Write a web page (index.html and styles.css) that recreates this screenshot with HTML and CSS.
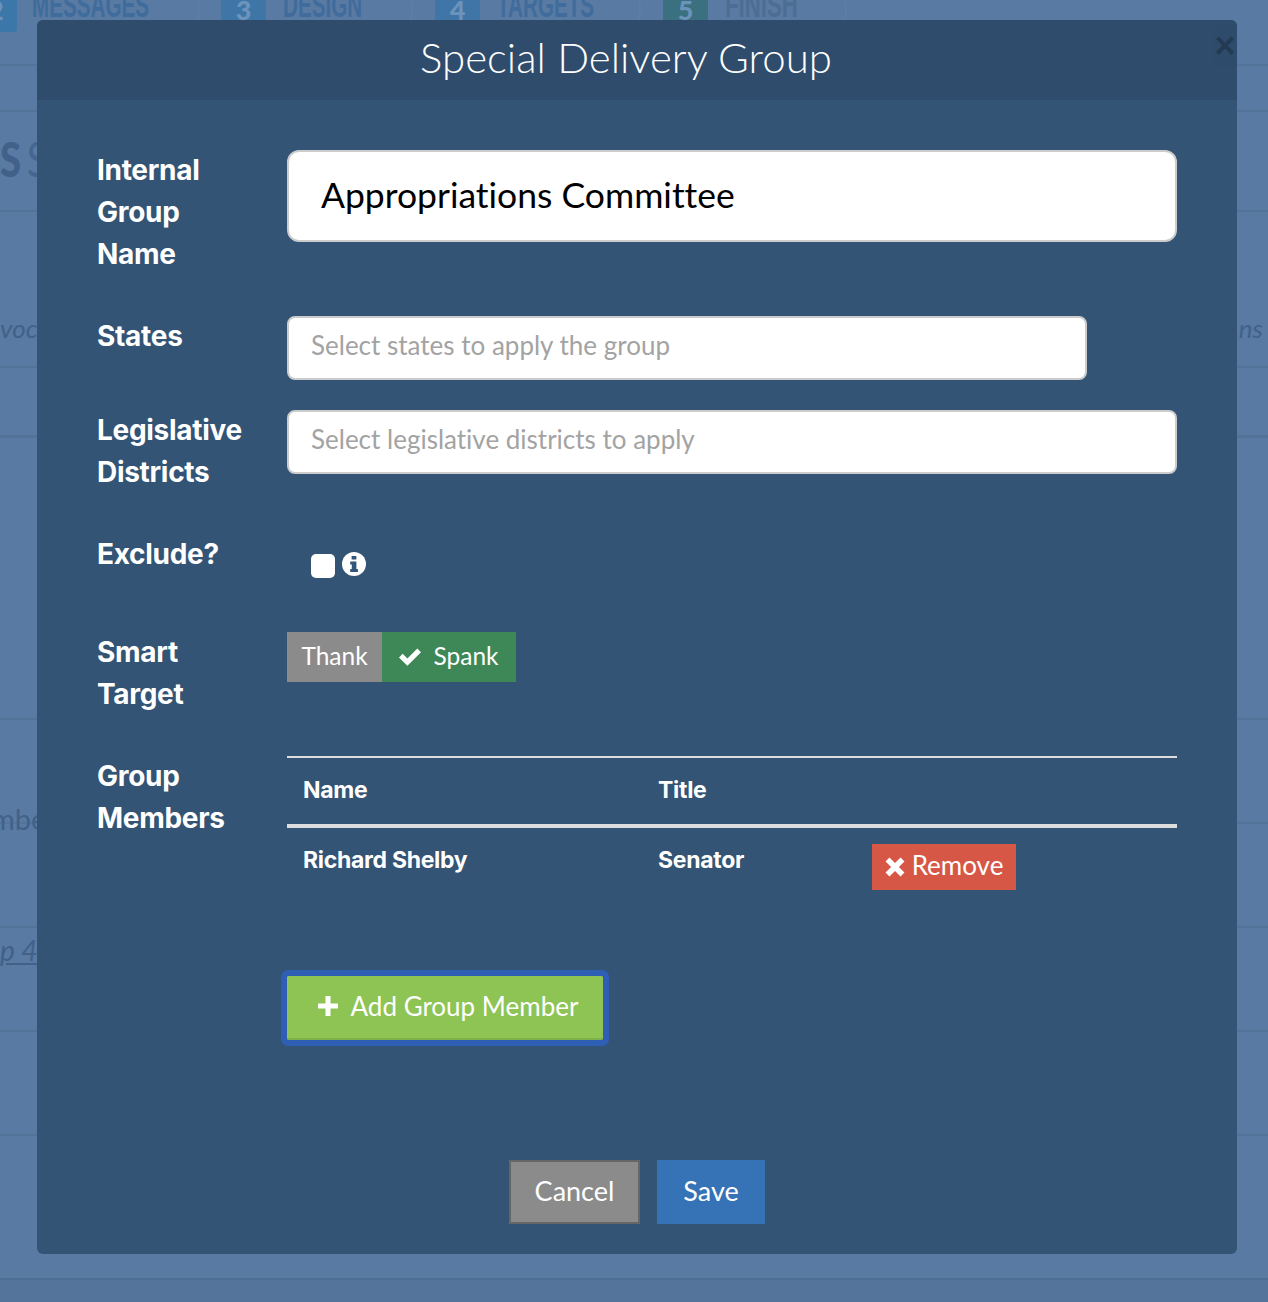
FILE: index.html
```html
<!DOCTYPE html>
<html lang="en">
<head>
<meta charset="utf-8">
<title>Special Delivery Group</title>
<link rel="stylesheet" href="styles.css">
</head>
<body>
<div class="page">
  <div class="steps">
    <div class="step step-1"><span class="num num-first">2</span><span class="step-name">MESSAGES</span><svg class="arc" viewBox="0 0 6 40" aria-hidden="true"><path d="M0 0q6 10 5 20T0 40"/></svg></div>
    <div class="step step-2"><span class="num num-3">3</span><span class="step-name">DESIGN</span><svg class="arc" viewBox="0 0 6 40" aria-hidden="true"><path d="M0 0q6 10 5 20T0 40"/></svg></div>
    <div class="step step-3"><span class="num num-4">4</span><span class="step-name">TARGETS</span><svg class="arc" viewBox="0 0 6 40" aria-hidden="true"><path d="M0 0q6 10 5 20T0 40"/></svg></div>
    <div class="step step-4"><span class="num num-5">5</span><span class="step-name step-name-last">FINISH</span><svg class="arc" viewBox="0 0 6 40" aria-hidden="true"><path d="M0 0q6 10 5 20T0 40"/></svg></div>
  </div>
  <div class="bg-row h46"></div>
  <div class="bg-row h100"><span class="bg-heading">S<span class="bg-heading-thin">S</span></span></div>
  <div class="bg-row h156"><span class="bg-it">voc</span><span class="bg-it">ns</span></div>
  <div class="bg-row h70"></div>
  <div class="bg-row h282"></div>
  <div class="bg-row h104 pad-84"><span class="bg-plain">mbe</span></div>
  <div class="bg-row h104"></div>
  <div class="bg-row h104 pad-7"><span class="bg-it bg-link">p 4</span></div>
  <div class="bg-row h104"></div>
  <div class="bg-row h144"></div>
  <div class="bg-foot"></div>
</div>

<div class="modal">
  <header class="modal-head">
    <h1 class="modal-title">Special Delivery Group</h1>
    <span class="close">&times;</span>
  </header>
  <form class="modal-body">
    <div class="row r-41">
      <label class="lbl">Internal Group Name</label>
      <input class="field field-big" type="text" value="Appropriations Committee">
    </div>
    <div class="row r-30">
      <label class="lbl">States</label>
      <input class="field field-short" type="text" placeholder="Select states to apply the group">
    </div>
    <div class="row r-41">
      <label class="lbl">Legislative Districts</label>
      <input class="field" type="text" placeholder="Select legislative districts to apply">
    </div>
    <div class="row r-41">
      <label class="lbl">Exclude?</label>
      <div class="check-wrap">
        <input class="check" type="checkbox">
        <svg class="info" viewBox="0 0 24 24" aria-hidden="true">
          <circle cx="12" cy="12" r="12" fill="#fff"/>
          <rect x="9.6" y="4" width="4.8" height="3.6" rx=".6" fill="#34557a"/>
          <path d="M8.2 9.4h6.2v7.6h1.5V20H8.2v-3h1.6v-4.6H8.2z" fill="#34557a"/>
        </svg>
      </div>
    </div>
    <div class="row r-41">
      <label class="lbl">Smart Target</label>
      <div class="toggle">
        <button type="button" class="tg tg-off">Thank</button>
        <button type="button" class="tg tg-on">
          <svg class="tg-check" viewBox="0 0 22 18" aria-hidden="true"><path d="M0 9.400 3.700 5.700l4.700 4.700L18.300 .5 22 4.200 8.400 17.800z" fill="#fff"/></svg>
          Spank
        </button>
      </div>
    </div>
    <div class="row">
      <label class="lbl">Group Members</label>
      <div class="members">
        <table class="tbl">
          <thead>
            <tr><th class="c1">Name</th><th class="c2">Title</th><th class="c3"></th></tr>
          </thead>
          <tbody>
            <tr>
              <td class="cell-text">Richard Shelby</td>
              <td class="cell-text">Senator</td>
              <td class="cell-action">
                <button type="button" class="btn-remove">
                  <svg class="x-icon" viewBox="0 0 18 18" aria-hidden="true"><path d="M4 .5 9 5.500 14 .5 17.500 4 12.500 9l5 5L14 17.500l-5-5-5 5L.5 14l5-5-5-5z" fill="#fff"/></svg>
                  Remove
                </button>
              </td>
            </tr>
          </tbody>
        </table>
        <button type="button" class="btn-add">
          <svg class="plus" viewBox="0 0 20 20" aria-hidden="true"><path d="M7.500 0h5v7.500H20v5h-7.500V20h-5v-7.500H0v-5h7.500z" fill="#fff"/></svg>
          Add Group Member
        </button>
      </div>
    </div>
    <div class="foot">
      <button type="button" class="btn-cancel">Cancel</button>
      <button type="button" class="btn-save">Save</button>
    </div>
  </form>
</div>
</body>
</html>
```
FILE: styles.css
```css
* { box-sizing: border-box; }
html, body { margin: 0; padding: 0; height: 1302px; overflow: hidden; }
body { background: #597aa2; font-family: "Lato", "Noto Sans", sans-serif; color: #fff; position: relative; }

/* page behind the modal */
.page { width: 100%; }
.steps { height: 66px; display: flex; border-bottom: 2px solid #547399; overflow: hidden; align-items: flex-start; }
.step { display: flex; align-items: flex-start; flex: none; }
.step-1 { width: 221px; }
.step-2 { width: 214px; }
.step-3 { width: 228px; }
.step-4 { width: 200px; }
.num { display: block; flex: none; width: 45px; height: 20px; background: #3e76a8; color: #6c93bb; font: 900 27px/19px "Lato", sans-serif; text-align: center; overflow: hidden; }
.num-first { width: 17px; height: 32px; border-radius: 0 0 3px 0; background: #3c77aa; text-align: left; text-indent: -12px; }
.num-4 { background: #3f75a7; }
.num-5 { background: #3a7080; }
.step-name { display: block; width: 0; white-space: nowrap; margin: -13px 0 0 17px; font: 700 35px/36px "Liberation Sans", sans-serif; color: #3f6c9c; transform: scaleX(.59); transform-origin: left top; }
.num-first + .step-name { margin-left: 15px; }
.step-name-last { color: #4d6d94; transform: scaleX(.635); }
.arc { flex: none; width: 6px; height: 40px; margin-top: -9px; margin-left: auto; fill: none; stroke: #5f80a8; stroke-width: 1.2; }
.step-1 .arc { margin-right: 21px; }
.step-2 .arc { margin-right: 22px; }
.step-3 .arc { margin-right: 22px; }
.step-4 .arc { margin-right: 16px; }
.bg-row { border-bottom: 2px solid #547399; display: flex; justify-content: space-between; align-items: flex-start; padding-right: 5px; }
.h46 { height: 46px; }
.h100 { height: 100px; padding-top: 23px; overflow: hidden; }
.h156 { height: 156px; padding-top: 101px; }
.h70 { height: 70px; border-bottom-width: 3px; }
.h282 { height: 282px; }
.h104 { height: 104px; }
.h144 { height: 144px; border-bottom-color: #4f6e95; }
.pad-84 { padding-top: 84px; }
.pad-7 { padding-top: 7px; }
.bg-foot { height: 24px; background: #55749b; }
.bg-heading { font: 900 48px/1 "Lato", sans-serif; color: #41618a; display: flex; gap: 7px; transform: scaleX(.8); transform-origin: left top; }
.bg-heading-thin { font-weight: 400; color: #45668f; }
.bg-it { font: italic 400 26px/30px "Lato", sans-serif; color: #41618a; }
.bg-plain { font: 400 29px/30px "Lato", sans-serif; color: #41618a; margin-left: -9px; }
.bg-link { text-decoration: underline; }
.pad-7 .bg-it { font-size: 28px; }

/* modal */
.modal { position: absolute; left: 37px; top: 20px; width: 1200px; height: 1234px; background: #335474; border-radius: 6px; overflow: hidden; }
.modal-head { height: 80px; background: #2f4c6c; display: flex; justify-content: center; position: relative; padding-right: 22px; }
.modal-title { margin: 0; font: 300 42px/74px "Lato", sans-serif; color: #fff; font-variant-ligatures: none; }
.close { position: absolute; right: 0; top: 6px; width: 24px; text-align: center; font: 700 36px/40px "Liberation Sans", sans-serif; color: #22384f; opacity: .85; }
.modal-body { display: flex; flex-direction: column; padding: 50px 60px 30px; height: 1154px; }

.row { display: grid; grid-template-columns: 190px 1fr; align-items: start; }
.r-41 { margin-bottom: 41px; }
.r-30 { margin-bottom: 30px; }
.lbl { display: block; margin-top: -1px; font: 700 28px/42px "Inter", sans-serif; letter-spacing: -.3px; color: #fff; padding-right: 30px; }

.field { display: block; width: 100%; height: 64px; padding: 0 22px 7px; border: 2px solid #ccc; border-radius: 8px; background: #fff; font: 400 26px "Lato", sans-serif; font-variant-ligatures: none; color: #000; outline: none; }
.field::placeholder { color: #a3a3a3; opacity: 1; }
.field-big { height: 92px; padding: 0 32px 4px; border-radius: 12px; font-size: 35.500px; }
.field-short { width: 800px; }

.check-wrap { display: flex; align-items: flex-start; height: 57px; padding: 18px 0 0 24px; }
.check { appearance: none; -webkit-appearance: none; width: 24px; height: 24px; margin: 2px 7px 0 0; background: #fff; border-radius: 5px; }
.info { width: 24px; height: 24px; }

.toggle { display: flex; height: 50px; }
.tg { border: 0; padding: 0 0 3px; height: 50px; color: #fff; font: 400 24.500px "Lato", sans-serif; display: flex; align-items: center; justify-content: center; }
.tg-off { width: 95px; background: #8b8b8b; }
.tg-on { width: 134px; background: #3e8757; gap: 12px; }
.tg-check { width: 22px; height: 18px; margin-top: 2px; }

.members { display: flex; flex-direction: column; align-items: flex-start; }
.tbl { width: 890px; border-collapse: collapse; table-layout: fixed; border-top: 2px solid #ddd; }
.c1 { width: 355px; }
.c2 { width: 214px; }
.tbl th, .tbl td { padding: 0 16px; text-align: left; font: 700 23px/30px "Inter", sans-serif; letter-spacing: -.3px; color: #fff; vertical-align: top; }
.tbl th { height: 69px; padding-top: 17px; border-bottom: 4px solid #ddd; }
.tbl td { height: 150px; }
.cell-text { padding-top: 17px !important; }
.cell-action { padding-top: 16px !important; }
.btn-remove { display: flex; align-items: center; justify-content: center; gap: 7px; width: 144px; height: 46px; border: 0; padding: 0 0 5px; background: #d65745; color: #fff; font: 400 26px "Lato", sans-serif; }
.x-icon { width: 20px; height: 20px; margin-top: 5px; }

.btn-add { display: flex; align-items: center; justify-content: center; gap: 13px; width: 316px; height: 64px; border: 0; border-bottom: 2px solid #7fb14a; background: #8dc454; color: #fff; font: 400 26px "Lato", sans-serif; outline: 6px solid #2f5fb5; outline-offset: 0; border-radius: 1px; padding: 0 0 2px 6px; }
.plus { width: 20px; height: 20px; }

.foot { margin-top: auto; display: flex; justify-content: center; gap: 17px; }
.btn-cancel, .btn-save { height: 64px; padding: 0 0 3px; font: 400 27px "Lato", sans-serif; color: #fff; }
.btn-cancel { width: 131px; background: #8b8b8b; border: 2px solid #666; }
.btn-save { width: 108px; background: #3572b6; border: 0; }
```
